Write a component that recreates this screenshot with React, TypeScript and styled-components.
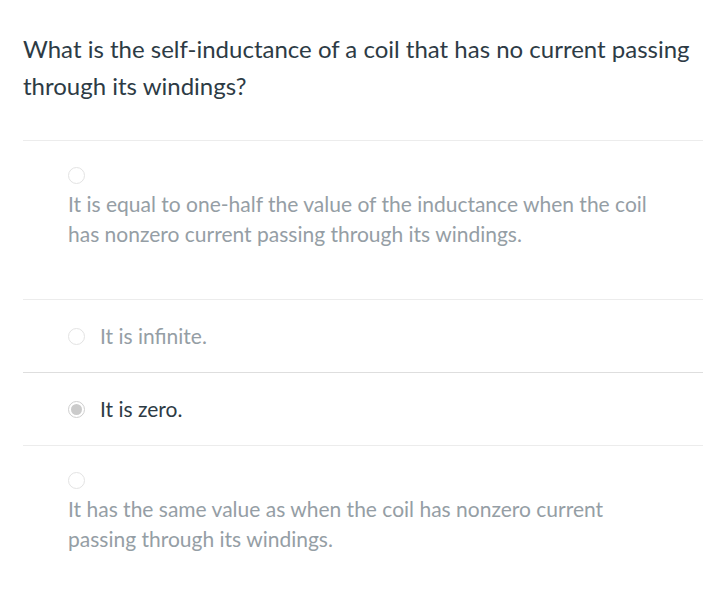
import React from "react";
import styled, { createGlobalStyle } from "styled-components";

const Global = createGlobalStyle`
  html, body { margin: 0; padding: 0; background: #ffffff; }
  body { font-family: Lato, "Open Sans", "Liberation Sans", sans-serif; }
`;

const Page = styled.div`
  padding: 30px 12px 0 23px;
`;

const Question = styled.div`
  font-size: 24px;
  line-height: 37px;
  color: #2d3b45;
  padding-bottom: 36px;
  border-bottom: 1px solid #ececec;
`;

const Answer = styled.div<{ $dark?: boolean }>`
  padding: 21px 0 21px 45px;
  border-bottom: 1px solid ${(p) => (p.$dark ? "#dedede" : "#ececec")};
  font-size: 21px;
  line-height: 30px;
  &:last-child {
    border-bottom: none;
  }
`;

const Inline = styled.div`
  display: flex;
  align-items: center;
`;

const RadioLine = styled.div`
  height: 30px;
  display: flex;
  align-items: center;
  margin-top: -2px;
`;

const Radio = styled.span<{ $checked?: boolean }>`
  box-sizing: border-box;
  width: 17px;
  height: 17px;
  border-radius: 50%;
  border: 1px solid ${(p) => (p.$checked ? "#cfcfcf" : "#e3e3e3")};
  background: #ffffff;
  display: inline-flex;
  align-items: center;
  justify-content: center;
  flex: none;
  &::after {
    content: "";
    display: ${(p) => (p.$checked ? "block" : "none")};
    width: 11px;
    height: 11px;
    border-radius: 50%;
    background: #cbcbcb;
  }
`;

const Text = styled.span<{ $selected?: boolean }>`
  color: ${(p) => (p.$selected ? "#2d3b45" : "#959ea5")};
`;

const InlineText = styled(Text)`
  margin-left: 15px;
`;

const Block = styled.div`
  color: #959ea5;
  padding-bottom: 29px;
  margin-top: -1px;
`;

const Wrap = styled.div`
  max-width: 590px;
`;

type Opt = { text: string; multi?: boolean; selected?: boolean; dark?: boolean };

const options: Opt[] = [
  {
    text: "It is equal to one-half the value of the inductance when the coil has nonzero current passing through its windings.",
    multi: true,
  },
  { text: "It is infinite.", dark: true },
  { text: "It is zero.", selected: true },
  {
    text: "It has the same value as when the coil has nonzero current passing through its windings.",
    multi: true,
  },
];

export default function App() {
  return (
    <Page>
      <Global />
      <Question>
        What is the self-inductance of a coil that has no current passing through its windings?
      </Question>
      {options.map((o, i) => (
        <Answer key={i} $dark={o.dark}>
          {o.multi ? (
            <>
              <RadioLine>
                <Radio />
              </RadioLine>
              <Block>
                <Wrap>{o.text}</Wrap>
              </Block>
            </>
          ) : (
            <Inline>
              <Radio $checked={o.selected} />
              <InlineText $selected={o.selected}>{o.text}</InlineText>
            </Inline>
          )}
        </Answer>
      ))}
    </Page>
  );
}
